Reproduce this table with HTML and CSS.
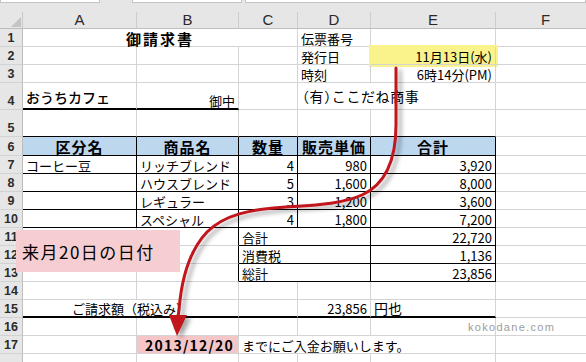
FILE: index.html
```html
<!DOCTYPE html>
<html lang="ja">
<head>
<meta charset="utf-8">
<title>御請求書</title>
<link rel="stylesheet" href="styles.css">
</head>
<body>
<div class="app">
  <div class="topbar">
    <span class="tbox tb1"></span><span class="tbox tb2"></span><span class="tbox tb3"></span>
  </div>
  <div class="sheet">
    <div class="corner"><svg width="23" height="17" viewBox="0 0 23 17"><polygon points="21,5 21,15 11,15" fill="#c4c4c4"/></svg></div>
    <div class="ch">A</div><div class="ch">B</div><div class="ch">C</div><div class="ch">D</div><div class="ch">E</div><div class="ch">F</div>

    <div class="rh">1</div>
    <div class="c s3 ctr title">御請求書</div>
    <div class="c">伝票番号</div><div class="c"></div><div class="c"></div>

    <div class="rh">2</div>
    <div class="c"></div><div class="c"></div><div class="c"></div>
    <div class="c">発行日</div><div class="c r hl">11月13日(水)</div><div class="c"></div>

    <div class="rh">3</div>
    <div class="c"></div><div class="c"></div><div class="c"></div>
    <div class="c">時刻</div><div class="c r">6時14分(PM)</div><div class="c"></div>

    <div class="rh">4</div>
    <div class="c u2 big cafe">おうちカフェ</div><div class="c u2 r">御中</div><div class="c"></div>
    <div class="c s2 big co">（有）ここだね商事</div><div class="c"></div>

    <div class="rh">5</div>
    <div class="c bb"></div><div class="c bb"></div><div class="c bb"></div><div class="c bb"></div><div class="c bb"></div><div class="c"></div>

    <div class="rh">6</div>
    <div class="c tb hd">区分名</div><div class="c tb hd">商品名</div><div class="c tb hd">数量</div><div class="c tb hd">販売単価</div><div class="c tb hd">合計</div><div class="c"></div>

    <div class="rh">7</div>
    <div class="c tb">コーヒー豆</div><div class="c tb">リッチブレンド</div><div class="c tb r">4</div><div class="c tb r">980</div><div class="c tb r">3,920</div><div class="c"></div>

    <div class="rh">8</div>
    <div class="c tb"></div><div class="c tb">ハウスブレンド</div><div class="c tb r">5</div><div class="c tb r">1,600</div><div class="c tb r">8,000</div><div class="c"></div>

    <div class="rh">9</div>
    <div class="c tb"></div><div class="c tb">レギュラー</div><div class="c tb r">3</div><div class="c tb r">1,200</div><div class="c tb r">3,600</div><div class="c"></div>

    <div class="rh">10</div>
    <div class="c tb"></div><div class="c tb">スペシャル</div><div class="c tb r">4</div><div class="c tb r">1,800</div><div class="c tb r">7,200</div><div class="c"></div>

    <div class="rh">11</div>
    <div class="c"></div><div class="c br"></div><div class="c s2 tb">合計</div><div class="c tb r">22,720</div><div class="c"></div>

    <div class="rh">12</div>
    <div class="c"></div><div class="c br"></div><div class="c s2 tb">消費税</div><div class="c tb r">1,136</div><div class="c"></div>

    <div class="rh">13</div>
    <div class="c"></div><div class="c br"></div><div class="c s2 tb">総計</div><div class="c tb r">23,856</div><div class="c"></div>

    <div class="rh">14</div>
    <div class="c"></div><div class="c"></div><div class="c"></div><div class="c"></div><div class="c"></div><div class="c"></div>

    <div class="rh">15</div>
    <div class="c s2 u2 ctr">ご請求額（税込み）</div><div class="c u2"></div><div class="c u2 r">23,856</div><div class="c u2 yen">円也</div><div class="c"></div>

    <div class="rh">16</div>
    <div class="c"></div><div class="c"></div><div class="c"></div><div class="c"></div><div class="c"></div><div class="c"></div>

    <div class="rh">17</div>
    <div class="c"></div><div class="c r due">2013/12/20</div><div class="c s3">までにご入金お願いします。</div><div class="c"></div>

    <div class="rh"></div>
    <div class="c"></div><div class="c"></div><div class="c"></div><div class="c"></div><div class="c"></div><div class="c"></div>
  </div>

  <div class="note">来月20日の日付</div>
  <div class="wm">kokodane.com</div>
  <svg class="arrow" width="586" height="362" viewBox="0 0 586 362">
    <defs>
      <filter id="sh" x="-20%" y="-20%" width="140%" height="140%">
        <feDropShadow dx="4" dy="3" stdDeviation="2" flood-color="#000" flood-opacity="0.35"/>
      </filter>
    </defs>
    <g filter="url(#sh)">
      <path d="M396,68 L396,125 C396,160 386,184 362,195 C342,204 315,205 286,207 C250,209 224,215 207,232 C190,250 183,275 180,300 L178,318" fill="none" stroke="#c0141c" stroke-width="3" stroke-linecap="round"/>
      <polygon points="169,315 187,315 177,336" fill="#c0141c"/>
    </g>
  </svg>
</div>
</body>
</html>
```
FILE: styles.css
```css
* { box-sizing: border-box; margin: 0; padding: 0; }
body {
  margin: 0;
  background: #fff;
  font-family: "Noto Sans CJK JP", "Noto Sans", sans-serif;
  color: #000;
}
.app {
  position: relative;
  width: 586px;
  height: 362px;
  overflow: hidden;
  background: #fff;
}
.topbar {
  height: 12px;
  background: #e6e6e6;
  display: flex;
  align-items: flex-start;
}
.tbox {
  height: 3px;
  background: #fff;
  border: 1px solid #c4c4c4;
  border-top: none;
}
.tb1 { width: 100px; }
.tb2 { width: 110px; margin-left: 32px; }
.tb3 { flex: 1; margin-left: 3px; }

.sheet {
  display: grid;
  grid-template-columns: 23px 114px 102px 59px 73px 125px 100px;
  grid-template-rows: 17px 18px 18px 18px 27px 27px 19px repeat(12, 18px);
}
.corner {
  background: #e6e6e6;
  border-right: 1px solid #c8c8c8;
  border-bottom: 1px solid #bdbdbd;
}
.corner svg { display: block; }
.ch {
  background: #e6e6e6;
  border-right: 1px solid #cdcdcd;
  border-bottom: 1px solid #bdbdbd;
  font-family: "Liberation Sans", Arial, sans-serif;
  font-size: 15px;
  line-height: 15px;
  color: #2a2a2a;
  display: flex;
  justify-content: center;
  align-items: flex-end;
  padding-bottom: 1px;
}
.rh {
  background: #e6e6e6;
  border-right: 1px solid #bdbdbd;
  border-bottom: 1px solid #d2d2d2;
  font-family: "Liberation Sans", Arial, sans-serif;
  font-size: 12.5px;
  font-weight: bold;
  line-height: 12px;
  color: #2b2b2b;
  display: flex;
  justify-content: center;
  align-items: flex-end;
  padding-bottom: 2px;
}
.c {
  border-right: 1px solid #d4d4d4;
  border-bottom: 1px solid #d4d4d4;
  font-size: 13px;
  line-height: 13px;
  display: flex;
  align-items: flex-end;
  padding: 0 3px 1px;
  white-space: nowrap;
}
.s2 { grid-column: span 2; }
.s3 { grid-column: span 3; }
.r { justify-content: flex-end; }
.ctr { justify-content: center; }
.title {
  font-size: 15px;
  line-height: 15px;
  font-weight: bold;
  letter-spacing: 2px;
  padding-bottom: 0;
}
.hl {
  background: #faf38c;
  box-shadow: 0 0 0 2px #faf38c;
}
.big { font-size: 14px; line-height: 14px; }
.cafe { font-weight: 500; padding-bottom: 4px; }
.co {
  padding-bottom: 6px;
  padding-left: 4px;
  font-feature-settings: "halt";
  letter-spacing: 0.6px;
}
.u2 { border-bottom: 2px solid #000; }
.bb { border-bottom-color: #000; }
.br { border-right-color: #000; }
.tb { border-right-color: #000; border-bottom-color: #000; }
.hd {
  background: #bdd7ee;
  justify-content: center;
  font-size: 15px;
  line-height: 15px;
  font-weight: bold;
  letter-spacing: 1px;
  padding: 0 1px 1px;
}
.yen { font-size: 14px; line-height: 14px; }
.due {
  background: #f4c6c8;
  font-size: 14px;
  line-height: 14px;
  font-weight: bold;
  letter-spacing: 1.2px;
  padding-right: 4px;
  padding-bottom: 1px;
}
.note {
  position: absolute;
  left: 16px;
  top: 230px;
  width: 164px;
  height: 42px;
  background: #f6cdd0;
  font-size: 17px;
  letter-spacing: 1.5px;
  padding-left: 6px;
  display: flex;
  align-items: center;
}
.wm {
  position: absolute;
  left: 468px;
  top: 321px;
  font-family: "Liberation Sans", Arial, sans-serif;
  font-size: 11px;
  line-height: 12px;
  letter-spacing: 1.3px;
  color: #9c9c9c;
}
.arrow {
  position: absolute;
  left: 0;
  top: 0;
  pointer-events: none;
}
```
